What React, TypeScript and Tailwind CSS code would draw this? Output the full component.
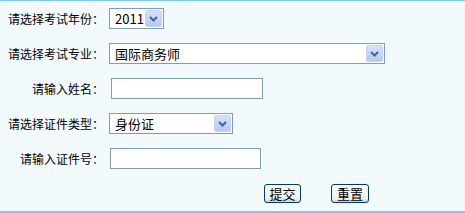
import React from 'react';

const font = { fontFamily: '"Noto Sans CJK SC", "Liberation Sans", sans-serif' };

function Arrow() {
  return (
    <span className="absolute right-[1px] top-[1px] bottom-[1px] w-[17px] rounded-[2px] border border-[#c3d3fd] bg-[linear-gradient(180deg,#d6e2fe_0%,#b6c9f6_100%)] flex items-center justify-center">
      <svg width="9" height="6" viewBox="0 0 9 6">
        <path d="M1 1 L4.5 4.5 L8 1" fill="none" stroke="#4d6185" strokeWidth="2" />
      </svg>
    </span>
  );
}

function Select({ value, width }: { value: string; width: string }) {
  return (
    <div className={`relative h-[21px] ${width} border border-[#7f9db9] bg-white flex items-center pl-[5px] text-[13px] text-black`}>
      {value}
      <Arrow />
    </div>
  );
}

function Row({ label, children }: { label: string; children: React.ReactNode }) {
  return (
    <div className="h-[35px] flex items-center">
      <div className="w-[105px] text-right text-[12px] text-black pr-[1px]">{label}</div>
      {children}
    </div>
  );
}

export default function App() {
  return (
    <div style={font} className="w-[465px] h-[213px] bg-[#f2fafd] border-t border-t-[#80c8f0] border-b-2 border-b-[#80c8f0] flex flex-col">
      <Row label="请选择考试年份：">
        <div className="ml-[4px]"><Select value="2011" width="w-[55px]" /></div>
      </Row>
      <Row label="请选择考试专业：">
        <div className="ml-[4px]"><Select value="国际商务师" width="w-[276px]" /></div>
      </Row>
      <Row label="请输入姓名：">
        <input className="ml-[6px] h-[21px] w-[152px] border border-[#7f9db9] bg-white outline-none" />
      </Row>
      <Row label="请选择证件类型：">
        <div className="ml-[4px]"><Select value="身份证" width="w-[124px]" /></div>
      </Row>
      <Row label="请输入证件号：">
        <input className="ml-[5px] h-[21px] w-[151px] border border-[#7f9db9] bg-white outline-none" />
      </Row>
      <div className="h-[35px] flex items-center pl-[264px] gap-[30px]">
        <button className="h-[19px] w-[37px] rounded-[3px] border border-[#003c74] bg-[linear-gradient(180deg,#ffffff_0%,#f0f0ea_80%,#d6d0c5_100%)] text-[13px] leading-none text-black">提交</button>
        <button className="h-[19px] w-[38px] rounded-[3px] border border-[#003c74] bg-[linear-gradient(180deg,#ffffff_0%,#f0f0ea_80%,#d6d0c5_100%)] text-[13px] leading-none text-black">重置</button>
      </div>
    </div>
  );
}
